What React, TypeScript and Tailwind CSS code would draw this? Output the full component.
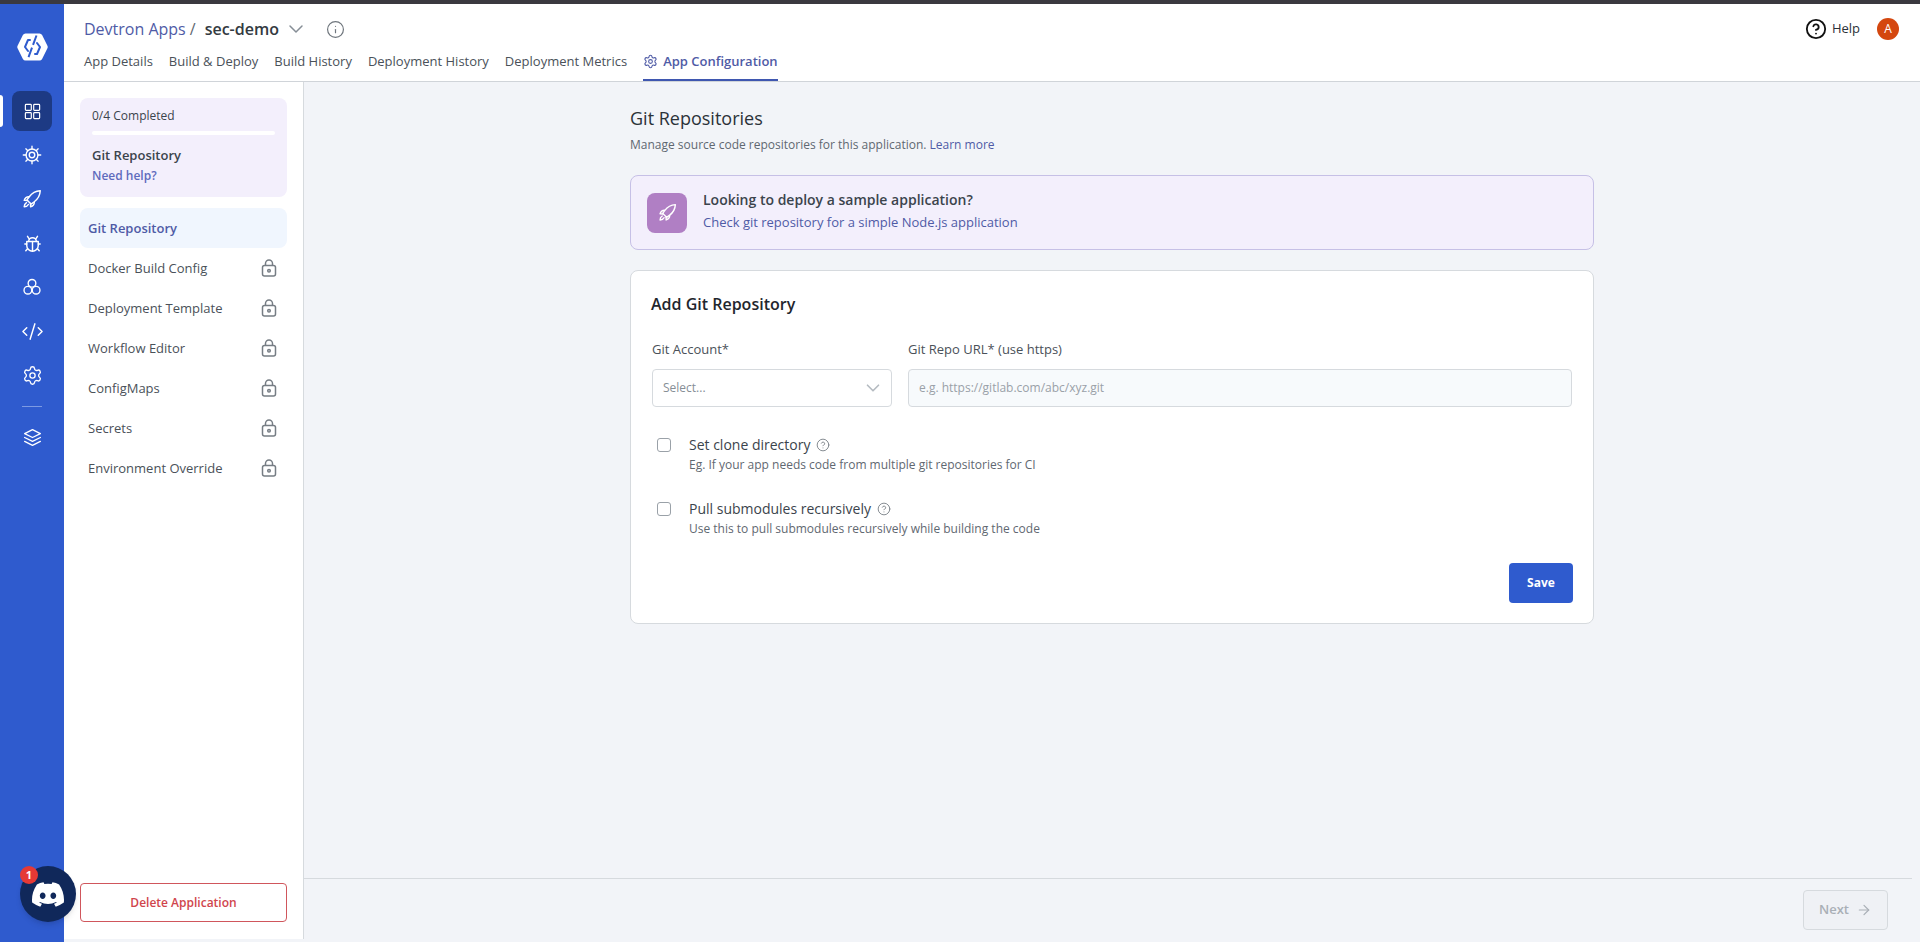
import React from "react";
import { ArrowRight, ChevronDown, CircleHelp, Code2, Info, Settings } from "lucide-react";

const I = ({ children, size = 24, sw = 1.5, className = "" }: { children: React.ReactNode; size?: number; sw?: number; className?: string }) => (
  <svg width={size} height={size} viewBox="0 0 24 24" fill="none" stroke="currentColor" strokeWidth={sw} strokeLinecap="round" strokeLinejoin="round" className={className}>
    {children}
  </svg>
);

const Logo = () => (
  <svg width="31" height="28" viewBox="0 0 31 28">
    <path d="M8.500 0.500h14a3 3 0 0 1 2.600 1.500l5.200 10.500a3 3 0 0 1 0 3L25.100 26a3 3 0 0 1-2.600 1.500h-14A3 3 0 0 1 5.900 26L0.700 15.500a3 3 0 0 1 0-3L5.900 2a3 3 0 0 1 2.600-1.500z" fill="#fff" />
    <path d="M13 7h-2L8 14l3 4" fill="none" stroke="#2f5bce" strokeWidth="2" strokeLinecap="round" strokeLinejoin="round" />
    <path d="M18 21h2l3-7-3-4" fill="none" stroke="#2f5bce" strokeWidth="2" strokeLinecap="round" strokeLinejoin="round" />
    <path d="M19.500 2.500 11 25.500" fill="none" stroke="#2f5bce" strokeWidth="2" strokeDasharray="10 3 10" />
  </svg>
);

const Rocket = ({ size = 18 }: { size?: number }) => (
  <I size={size} sw={1.6}>
    <path d="M21 3c-5 .3-9 2.500-12 6.500L6.500 13l4.500 4.500 3.500-2.500C18.500 12 20.700 8 21 3z" />
    <path d="M8.500 9.500C6.500 9.500 4.500 10.500 3.500 13.500l3.500.2" />
    <path d="M14.500 15.500c0 2-1 4-4 5l-.2-3.500" />
    <path d="M6 16c-1.800 1-2.500 3-2.500 4.500C5 20.500 7 20 8 18" />
  </I>
);

const Grid4 = () => (
  <I size={19} sw={1.5}>
    <rect x="3" y="3" width="7.500" height="7.500" rx="1" />
    <rect x="13.500" y="3" width="7.500" height="7.500" rx="1" />
    <rect x="3" y="13.500" width="7.500" height="7.500" rx="1" />
    <rect x="13.500" y="13.500" width="7.500" height="7.500" rx="1" />
  </I>
);

const Helm = () => (
  <I size={22} sw={1.5}>
    <circle cx="12" cy="12" r="6.500" />
    <circle cx="12" cy="12" r="3" />
    <path d="M12 2.500v3M12 18.500v3M2.500 12h3M18.500 12h3M5.300 5.300l2.100 2.100M16.600 16.600l2.100 2.100M5.300 18.700l2.100-2.100M16.600 7.400l2.100-2.100" />
  </I>
);

const Bug = () => (
  <I size={23} sw={1.5}>
    <path d="M6 10h12v4a6 6 0 0 1-12 0v-4z" />
    <path d="M8 10a4 4 0 0 1 8 0" />
    <path d="M12 10v10M6 12.500H4M20 12.500h-2M6.800 17.500 5 19.500M17.200 17.500l1.800 2M8.700 7.500 6.800 4.500M15.300 7.500l1.900-3" />
  </I>
);

const Circles = () => (
  <I size={22} sw={1.5}>
    <circle cx="12" cy="8" r="4.200" />
    <circle cx="7.500" cy="15.500" r="4.200" />
    <circle cx="16.500" cy="15.500" r="4.200" />
  </I>
);

const Stack = () => (
  <I size={21} sw={1.5}>
    <path d="M12 3l9 4.500-9 4.500-9-4.500L12 3z" />
    <path d="M3 12l9 4.500 9-4.500" />
    <path d="M3 16.500L12 21l9-4.500" />
  </I>
);

const Lock = () => (
  <svg width="16" height="18" viewBox="0 0 16 18" fill="none" stroke="#767d84" strokeWidth="1.500">
    <rect x="1.500" y="6.500" width="13" height="10.500" rx="2" />
    <path d="M4.500 6.500V4.500a3.500 3.500 0 0 1 7 0v2" />
    <circle cx="8" cy="11.800" r="1.300" />
  </svg>
);

const Discord = () => (
  <svg width="32" height="25" viewBox="0 0 127.140 96.360" fill="#fff">
    <path d="M107.700 8.070A105.150 105.150 0 0 0 81.470 0a72.060 72.060 0 0 0-3.360 6.830 97.680 97.680 0 0 0-29.110 0A72.370 72.370 0 0 0 45.640 0a105.890 105.890 0 0 0-26.250 8.090C2.790 32.650-1.710 56.600.540 80.210a105.730 105.730 0 0 0 32.170 16.150 77.700 77.700 0 0 0 6.890-11.110 68.420 68.420 0 0 1-10.850-5.180c.91-.66 1.800-1.340 2.660-2a75.570 75.570 0 0 0 64.320 0c.87.710 1.760 1.390 2.660 2a68.680 68.680 0 0 1-10.870 5.190 77 77 0 0 0 6.890 11.100 105.250 105.250 0 0 0 32.190-16.140c2.640-27.380-4.510-51.110-18.900-72.150zM42.450 65.690C36.180 65.690 31 60 31 53s5-12.740 11.430-12.740S54 46 53.890 53s-5.050 12.690-11.440 12.690zm42.240 0C78.410 65.690 73.250 60 73.250 53s5-12.740 11.440-12.740S96.230 46 96.120 53s-5.040 12.690-11.430 12.690z" />
  </svg>
);

const railIcons = [
  <Helm key="a" />,
  <Rocket key="b" size={22} />,
  <Bug key="c" />,
  <Circles key="d" />,
  <Code2 key="e" size={23} strokeWidth={1.500} />,
  <Settings key="f" size={21} strokeWidth={1.500} />,
];

const tabs = ["App Details", "Build & Deploy", "Build History", "Deployment History", "Deployment Metrics"];
const steps = ["Docker Build Config", "Deployment Template", "Workflow Editor", "ConfigMaps", "Secrets", "Environment Override"];

export default function App() {
  return (
    <div className="relative flex h-[942px] w-full flex-col overflow-hidden bg-white font-['Open_Sans',sans-serif] text-[13px] text-[#3b444c]">
      <div className="h-1 shrink-0 bg-[#3a393f]" />
      <div className="flex min-h-0 flex-1">
        {/* Rail */}
        <aside className="flex w-16 shrink-0 flex-col items-center bg-[#2f5bce] text-white">
          <div className="mt-[29px] flex h-7 items-center justify-center"><Logo /></div>
          <div className="relative mt-[30px] flex h-10 w-10 items-center justify-center rounded-lg bg-[#1d3a84]">
            <Grid4 />
            <span className="absolute -left-3 top-1 h-8 w-[3px] rounded-r bg-white" />
          </div>
          <div className="mt-[2px] flex flex-col items-center">
            {railIcons.map((icon, i) => (
              <div key={i} className="flex h-11 w-10 items-center justify-center">{icon}</div>
            ))}
          </div>
          <div className="mt-[9px] h-px w-5 bg-[#7c9ae3]" />
          <div className="mt-[20px] flex h-5 items-center"><Stack /></div>
        </aside>

        <div className="flex min-w-0 flex-1 flex-col">
          {/* Header */}
          <header className="flex h-[78px] shrink-0 flex-col border-b border-[#d0d4d9] bg-white pl-5 pr-[21px]">
            <div className="flex h-[47px] items-center pt-[3px]">
              <span className="text-base text-[#4f5ba6]">Devtron Apps</span>
              <span className="ml-[4px] text-base text-[#5f6871]">/</span>
              <span className="ml-[9px] text-base font-semibold text-[#333a41]">sec-demo</span>
              <ChevronDown size={24} strokeWidth={1.500} className="ml-[5px] text-[#868e96]" />
              <Info size={19} strokeWidth={1.500} className="ml-[18px] text-[#6f767d]" />
              <div className="ml-auto flex items-center">
                <CircleHelp size={22} strokeWidth={2} className="text-[#111]" />
                <span className="ml-[5px] font-medium text-[#2a3138]">Help</span>
                <span className="ml-[17px] flex h-[22px] w-[22px] items-center justify-center rounded-full bg-[#d4470f] text-xs text-white">A</span>
              </div>
            </div>
            <nav className="flex h-[30px] gap-4">
              {tabs.map((t) => (
                <span key={t} className="leading-[20px] text-[#4a5159]">{t}</span>
              ))}
              <span className="flex h-[30px] items-start gap-[5px] border-b-[2px] border-[#3f57b0] font-semibold leading-[20px] text-[#4f5ba6]">
                <Settings size={15} strokeWidth={1.700} className="mt-[3px]" />
                App Configuration
              </span>
            </nav>
          </header>

          <div className="flex min-h-0 flex-1 bg-[#f2f4f8]">
            {/* Left panel */}
            <aside className="mb-[3px] flex w-[240px] shrink-0 flex-col border-r border-[#d6dade] bg-white px-4 pb-[17px] pt-4">
              <div className="h-[99px] rounded-lg bg-[#f3effc] px-3 pt-[9px]">
                <div className="text-xs leading-[18px] text-[#3b444c]">0/4 Completed</div>
                <div className="mt-[6px] h-1 w-[183px] rounded-sm bg-white" />
                <div className="mt-[10px] font-semibold leading-5 text-[#3b444c]">Git Repository</div>
                <div className="text-xs font-semibold leading-[22px] text-[#5f6bbd]">Need help?</div>
              </div>
              <div className="mt-[11px] flex h-10 items-center rounded-lg bg-[#f0f6fe] px-2 pt-px font-semibold text-[#4f5ba6]">Git Repository</div>
              {steps.map((s) => (
                <div key={s} className="flex h-10 items-center justify-between px-2 text-[#4a5159]">
                  <span className="pt-[2px]">{s}</span>
                  <span className="mr-[2px] flex"><Lock /></span>
                </div>
              ))}
              <button className="mt-auto h-[39px] rounded border border-[#d0565c] bg-white pt-px text-xs font-semibold text-[#d0454c]">Delete Application</button>
            </aside>

            {/* Main */}
            <main className="flex min-w-0 flex-1 flex-col bg-[#f2f4f8]">
              <div className="flex flex-1 justify-center pt-6">
                <div className="w-[964px]">
                  <h1 className="text-lg leading-[24px] text-[#2b3239]">Git Repositories</h1>
                  <p className="mt-[6px] text-xs leading-[18px] text-[#5f6871]">
                    Manage source code repositories for this application. <span className="text-[#4f5ba6]">Learn more</span>
                  </p>
                  <div className="mt-[21px] flex h-[75px] items-center rounded-lg border border-[#c6c0e6] bg-[#f3effc] pl-4">
                    <div className="flex h-10 w-10 items-center justify-center rounded-lg bg-[#b07fc4] text-white"><Rocket size={21} /></div>
                    <div className="ml-4 pb-[3px]">
                      <div className="text-sm font-semibold leading-[22px] text-[#3b444c]">Looking to deploy a sample application?</div>
                      <div className="leading-[22px] text-[#4f5ba6]">Check git repository for a simple Node.js application</div>
                    </div>
                  </div>
                  <section className="mt-5 h-[354px] rounded-lg border border-[#d6dade] bg-white pl-[21px] pr-5 pt-[22px]">
                    <h2 className="-ml-px text-base font-semibold leading-[22px] text-[#1f262d]">Add Git Repository</h2>
                    <div className="mt-6 flex gap-4">
                      <div className="w-[240px]">
                        <div className="leading-[20px] text-[#4a5159]">Git Account*</div>
                        <div className="mt-[10px] flex h-[38px] items-center justify-between rounded border border-[#d6dade] bg-white pl-[10px] pr-[7px] text-xs text-[#868e96]">
                          Select...
                          <ChevronDown size={22} strokeWidth={1.800} className="text-[#b5bbc1]" />
                        </div>
                      </div>
                      <div className="mr-px min-w-0 flex-1">
                        <div className="leading-[20px] text-[#4a5159]">Git Repo URL* (use https)</div>
                        <div className="mt-[10px] flex h-[38px] items-center rounded border border-[#d6dade] bg-[#f7fafc] pl-[10px] text-xs text-[#9aa1a8]">e.g. https://gitlab.com/abc/xyz.git</div>
                      </div>
                    </div>
                    <div className="mt-[25px] flex pl-[5px]">
                      <span className="mt-[6px] h-[14px] w-[14px] shrink-0 rounded-[3px] border-[1.500px] border-[#9aa1a8] bg-white" />
                      <div className="ml-[18px]">
                        <div className="flex items-center gap-[6px] text-sm leading-[26px] text-[#3b444c]">Set clone directory <CircleHelp size={14} strokeWidth={1.500} className="text-[#767d84]" /></div>
                        <div className="-mt-px text-xs leading-[16px] text-[#5f6871]">Eg. If your app needs code from multiple git repositories for CI</div>
                      </div>
                    </div>
                    <div className="mt-[23px] flex pl-[5px]">
                      <span className="mt-[6px] h-[14px] w-[14px] shrink-0 rounded-[3px] border-[1.500px] border-[#9aa1a8] bg-white" />
                      <div className="ml-[18px]">
                        <div className="flex items-center gap-[6px] text-sm leading-[26px] text-[#3b444c]">Pull submodules recursively <CircleHelp size={14} strokeWidth={1.500} className="text-[#767d84]" /></div>
                        <div className="-mt-px text-xs leading-[16px] text-[#5f6871]">Use this to pull submodules recursively while building the code</div>
                      </div>
                    </div>
                    <div className="mt-[26px] flex justify-end">
                      <button className="h-10 w-16 rounded bg-[#2f5bce] text-xs font-bold text-white">Save</button>
                    </div>
                  </section>
                </div>
              </div>
              <div className="mr-2 flex h-[64px] shrink-0 items-start justify-end border-t border-[#d6dade] pr-6 pt-[11px]">
                <button className="flex h-10 w-[85px] items-center justify-center gap-[7px] rounded border border-[#d6dade] bg-[#eff1f5] font-semibold text-[#a9afb6]">
                  Next <ArrowRight size={16} strokeWidth={1.800} />
                </button>
              </div>
            </main>
          </div>
        </div>
      </div>

      {/* Discord widget */}
      <div className="absolute left-5 top-[866px] flex h-14 w-14 items-center justify-center rounded-full bg-[#10285a] shadow-md">
        <Discord />
        <span className="absolute left-0 top-0 flex h-[18px] w-[18px] items-center justify-center rounded-full bg-[#e53935] text-[11px] font-bold text-white">1</span>
      </div>
    </div>
  );
}
